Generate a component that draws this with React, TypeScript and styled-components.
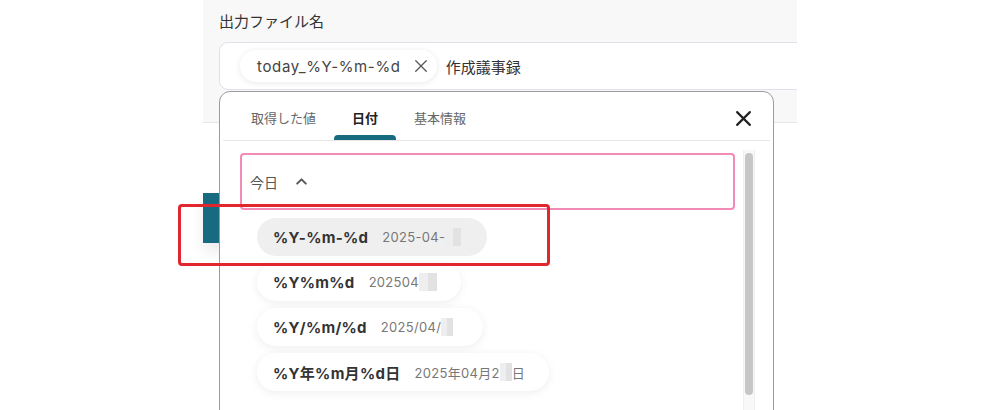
import React from "react";
import styled, { createGlobalStyle } from "styled-components";

const Global = createGlobalStyle`
  html, body { margin: 0; padding: 0; background: #ffffff; }
  body { font-family: Inter, "Noto Sans CJK JP", "Noto Sans", sans-serif; }
  * { box-sizing: border-box; }
`;

const Page = styled.div`
  position: relative;
  width: 1000px;
  height: 410px;
  overflow: hidden;
  background: #ffffff;
`;

const Panel = styled.section`
  margin-left: 203px;
  width: 594px;
  height: 123px;
  padding: 12px 0 0 16px;
  background: #f8f8f8;
  border-bottom: 1px solid #e3e6ea;
  overflow: hidden;
`;

const Label = styled.div`
  font-size: 15px;
  line-height: 20px;
  color: #333;
  height: 20px;
`;

const InputBox = styled.div`
  margin-top: 10px;
  width: 720px;
  height: 48px;
  background: #fff;
  border: 1px solid #dde2e8;
  border-radius: 9px;
  display: flex;
  align-items: center;
  padding-left: 20px;
  gap: 9px;
`;

const Chip = styled.div`
  height: 32px;
  border-radius: 16px;
  background: #fff;
  box-shadow: 0 1px 6px rgba(0, 0, 0, 0.09);
  display: flex;
  align-items: center;
  padding: 0 9px 0 17px;
  gap: 13px;
  font-size: 15px;
  color: #444;
  letter-spacing: 0.65px;
`;

const PlainText = styled.span`
  font-size: 15px;
  color: #333;
`;

const BackRow = styled.div`
  padding-left: 203px;
  margin-top: 70px;
`;

const TealButton = styled.div`
  width: 140px;
  height: 50px;
  background: #176a80;
  box-shadow: 0 8px 14px rgba(0, 0, 0, 0.08);
`;

const Dropdown = styled.div`
  position: absolute;
  left: 219px;
  top: 91px;
  width: 555px;
  height: 340px;
  background: #fff;
  border: 1px solid #9b9b9b;
  border-radius: 11px 11px 0 0;
  display: flex;
  flex-direction: column;
`;

const TabBar = styled.div`
  height: 49px;
  display: flex;
  align-items: stretch;
  padding-left: 10px;
  padding-right: 18px;
  margin: 0 3px;
  border-bottom: 1px solid #e6e6e6;
`;

const Tab = styled.div<{ $active?: boolean }>`
  position: relative;
  padding: 0 18px;
  display: flex;
  align-items: center;
  padding-top: 3px;
  font-size: 13px;
  color: ${(p) => (p.$active ? "#222" : "#666")};
  font-weight: ${(p) => (p.$active ? 700 : 400)};
  &::after {
    content: "";
    display: ${(p) => (p.$active ? "block" : "none")};
    position: absolute;
    left: 0;
    right: 0;
    bottom: 0;
    height: 5px;
    border-radius: 4px 4px 0 0;
    background: #176a80;
  }
`;

const Spacer = styled.div`
  flex: 1;
`;

const CloseBtn = styled.div`
  display: flex;
  align-items: center;
  padding-top: 5px;
`;

const Body = styled.div`
  flex: 1;
  display: flex;
  padding: 9px 18px 0 20px;
  gap: 8px;
`;

const List = styled.div`
  width: 495px;
  padding-top: 3px;
  display: flex;
  flex-direction: column;
`;

const Section = styled.div`
  height: 57px;
  border: 2px solid #f38bb7;
  border-radius: 4px;
  display: flex;
  align-items: center;
  padding-left: 8px;
  gap: 17px;
  font-size: 14px;
  color: #555;
`;

const Items = styled.div`
  display: flex;
  flex-direction: column;
  align-items: flex-start;
  gap: 7px;
  margin-top: 8px;
  padding-left: 17px;
`;

const Item = styled.div<{ $hover?: boolean; $pr: number }>`
  height: 38px;
  border-radius: 19px;
  display: flex;
  align-items: center;
  padding: 0 ${(p) => p.$pr}px 0 16px;
  gap: 14px;
  background: ${(p) => (p.$hover ? "#efefef" : "#fff")};
  box-shadow: ${(p) => (p.$hover ? "none" : "0 2px 10px rgba(0,0,0,0.07)")};
`;

const Format = styled.span`
  font-size: 15px;
  font-weight: 700;
  color: #333;
  letter-spacing: 0.3px;
`;

const Sample = styled.span`
  font-size: 13px;
  color: #777;
  letter-spacing: 0.3px;
  display: inline-flex;
  align-items: center;
`;

const Blur = styled.span<{ $w: number }>`
  display: inline-block;
  width: ${(p) => p.$w}px;
  height: 18px;
  background: linear-gradient(90deg, #eeeeee 0 50%, #e2e2e2 50% 100%);
  vertical-align: middle;
`;

const ScrollTrack = styled.div`
  width: 12px;
  background: #f8f8f8;
  border-left: 1px solid #efefef;
  border-right: 1px solid #efefef;
  padding: 3px 1px 0;
`;

const ScrollThumb = styled.div`
  height: 242px;
  border-radius: 5px;
  background: #c6c6c6;
`;

const Annotation = styled.div`
  position: absolute;
  left: 178px;
  top: 204px;
  width: 372px;
  height: 62px;
  border: 3px solid #e1262d;
  border-radius: 4px;
  pointer-events: none;
`;

const XIcon = ({ size, stroke, color }: { size: number; stroke: number; color: string }) => (
  <svg width={size} height={size} viewBox="0 0 16 16">
    <path d="M2 2 L14 14 M14 2 L2 14" stroke={color} strokeWidth={stroke} strokeLinecap="round" />
  </svg>
);

const ChevronUp = () => (
  <svg width="13" height="13" viewBox="0 0 12 12">
    <path d="M2 8 L6 4 L10 8" fill="none" stroke="#555" strokeWidth="1.8" strokeLinecap="round" strokeLinejoin="round" />
  </svg>
);

const items = [
  { f: "%Y-%m-%d", s: "2025-04-", blur: 16, tail: "", pr: 26, hover: true },
  { f: "%Y%m%d", s: "202504", blur: 18, tail: "", pr: 24, hover: false },
  { f: "%Y/%m/%d", s: "2025/04/", blur: 12, tail: "", pr: 30, hover: false },
  { f: "%Y年%m月%d日", s: "2025年04月2", blur: 12, tail: "日", pr: 24, hover: false },
];

export default function App() {
  return (
    <>
      <Global />
      <Page>
        <Panel>
          <Label>出力ファイル名</Label>
          <InputBox>
            <Chip>
              today_%Y-%m-%d
              <XIcon size={14} stroke={1.5} color="#555" />
            </Chip>
            <PlainText>作成議事録</PlainText>
          </InputBox>
        </Panel>
        <BackRow>
          <TealButton />
        </BackRow>
        <Dropdown>
          <TabBar>
            <Tab>取得した値</Tab>
            <Tab $active>日付</Tab>
            <Tab>基本情報</Tab>
            <Spacer />
            <CloseBtn>
              <XIcon size={17} stroke={2} color="#222" />
            </CloseBtn>
          </TabBar>
          <Body>
            <List>
              <Section>
                今日
                <ChevronUp />
              </Section>
              <Items>
                {items.map((it) => (
                  <Item key={it.f} $hover={it.hover} $pr={it.pr}>
                    <Format>{it.f}</Format>
                    <Sample>
                      {it.s}
                      <Blur $w={it.blur} />
                      {it.tail}
                    </Sample>
                  </Item>
                ))}
              </Items>
            </List>
            <ScrollTrack>
              <ScrollThumb />
            </ScrollTrack>
          </Body>
        </Dropdown>
        <Annotation />
      </Page>
    </>
  );
}
